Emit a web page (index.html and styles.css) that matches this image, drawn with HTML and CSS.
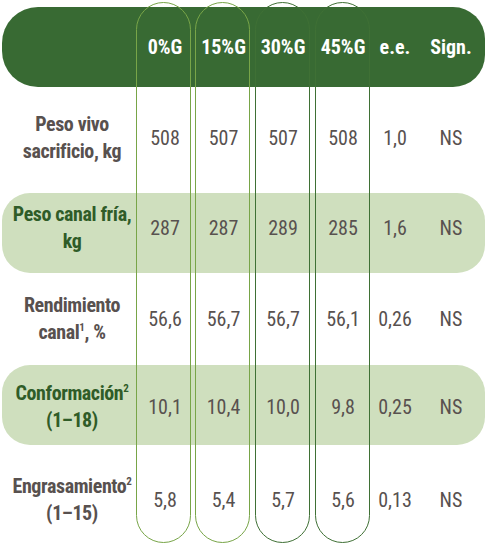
FILE: index.html
```html
<!DOCTYPE html>
<html lang="es">
<head>
    <meta charset="UTF-8">
    <meta name="viewport" content="width=device-width, initial-scale=1.0">
    <title>Canal</title>
    <link rel="stylesheet" href="styles.css">
</head>
<body>
    <div class="table">
        <div class="row head">
            <div class="cell label"></div>
            <div class="cell">0%G</div>
            <div class="cell">15%G</div>
            <div class="cell">30%G</div>
            <div class="cell">45%G</div>
            <div class="cell">e.e.</div>
            <div class="cell">Sign.</div>
        </div>

        <div class="row r1">
            <div class="cell label">Peso vivo<br>sacrificio, kg</div>
            <div class="cell">508</div>
            <div class="cell">507</div>
            <div class="cell">507</div>
            <div class="cell">508</div>
            <div class="cell">1,0</div>
            <div class="cell">NS</div>
        </div>

        <div class="row band r2">
            <div class="cell label">Peso canal fría,<br>kg</div>
            <div class="cell">287</div>
            <div class="cell">287</div>
            <div class="cell">289</div>
            <div class="cell">285</div>
            <div class="cell">1,6</div>
            <div class="cell">NS</div>
        </div>

        <div class="row r3">
            <div class="cell label">Rendimiento<br>canal<sup>1</sup>, %</div>
            <div class="cell">56,6</div>
            <div class="cell">56,7</div>
            <div class="cell">56,7</div>
            <div class="cell">56,1</div>
            <div class="cell">0,26</div>
            <div class="cell">NS</div>
        </div>

        <div class="row band r4">
            <div class="cell label">Conformación<sup>2</sup><br>(1–18)</div>
            <div class="cell">10,1</div>
            <div class="cell">10,4</div>
            <div class="cell">10,0</div>
            <div class="cell">9,8</div>
            <div class="cell">0,25</div>
            <div class="cell">NS</div>
        </div>

        <div class="row r5">
            <div class="cell label">Engrasamiento<sup>2</sup><br>(1–15)</div>
            <div class="cell">5,8</div>
            <div class="cell">5,4</div>
            <div class="cell">5,7</div>
            <div class="cell">5,6</div>
            <div class="cell">0,13</div>
            <div class="cell">NS</div>
        </div>

        <!-- column outlines drawn over the table -->
        <div class="capsule c1"></div>
        <div class="capsule c2"></div>
        <div class="capsule c3 dark"></div>
        <div class="capsule c4 dark"></div>
    </div>
</body>
</html>
```

FILE: styles.css
```css
:root {
    --head-green: #386a33;
    --band-green: #cfdfbe;
    --label-green: #2f5c28;
    --text-grey: #58514f;
    --line-light: #78a548;
    --line-dark: #3f7035;
}

body {
    margin: 0;
    background: #ffffff;
    font-family: "Roboto Condensed", "Open Sans Condensed", "Open Sans", sans-serif;
    font-stretch: 75%;
    font-size: 20px;
    color: var(--text-grey);
}

.table {
    position: relative;
    width: 483px;
    padding: 7px 0 0 2px;
}

.row {
    display: grid;
    grid-template-columns: 134px 58px 59px 60px 60px 44px 68px;
    align-items: center;
}

.cell {
    text-align: center;
    line-height: 27px;
    white-space: nowrap;
}

.label {
    font-weight: bold;
    letter-spacing: -0.4px;
    padding-left: 6px;
}

.head {
    height: 80px;
    background-color: var(--head-green);
    border-radius: 36px 32px 32px 36px;
    color: #ffffff;
    font-weight: bold;
}

.band {
    height: 80px;
    background-color: var(--band-green);
    border-radius: 28px;
}

.band .label {
    color: var(--label-green);
}

.r1 {
    height: 102px;
    padding-bottom: 4px;
}

.r2 {
    height: 70px;
    padding-bottom: 10px;
}

.r3 {
    height: 92px;
}

.r4 {
    height: 76px;
    padding-top: 4px;
}

.r5 {
    height: 110px;
}

sup {
    font-size: 11px;
    line-height: 0;
    vertical-align: 8px;
}

.capsule {
    position: absolute;
    top: 2px;
    width: 53px;
    height: 539px;
    border: 1.5px solid var(--line-light);
    border-radius: 28px;
}

.capsule.dark {
    border-color: var(--line-dark);
}

.c1 { left: 136px; }
.c2 { left: 195px; }
.c3 { left: 255px; }
.c4 { left: 315px; }
```
